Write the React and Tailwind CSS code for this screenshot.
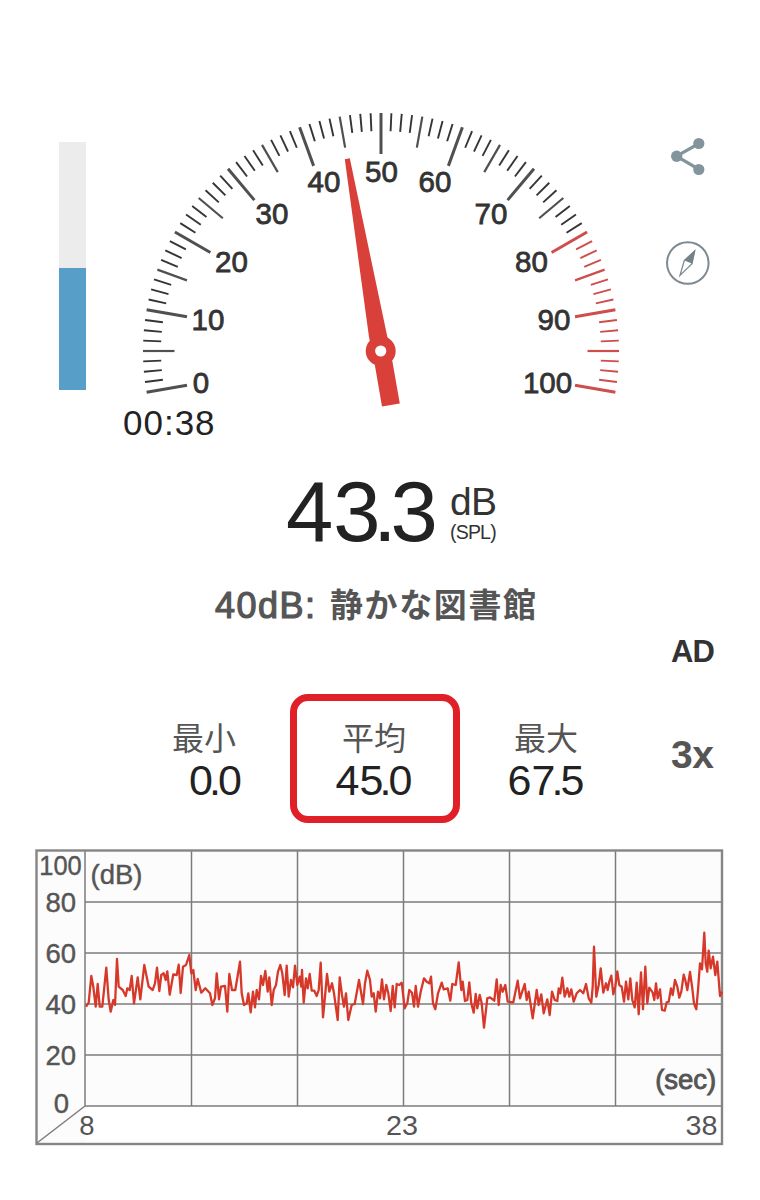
/**
 * Sound meter screen
 *
 * - Gauge: dial with needle
 * - Stat: min / average / max value
 * - HistoryChart: last 30 seconds
 */

const GAUGE_CENTER = { x: 381, y: 351 };

const GAUGE_LABELS = [
  { text: '0', x: 201, y: 393 },
  { text: '10', x: 208, y: 330.3 },
  { text: '20', x: 231.5, y: 271.7 },
  { text: '30', x: 272, y: 224 },
  { text: '40', x: 324, y: 192 },
  { text: '50', x: 381.5, y: 181.5 },
  { text: '60', x: 435, y: 192 },
  { text: '70', x: 491, y: 224 },
  { text: '80', x: 531.5, y: 271.7 },
  { text: '90', x: 554, y: 330.3 },
  { text: '100', x: 547.5, y: 393 },
];

// One tick every 1.25 dB, 2 degrees per dB, 50 dB straight up
const TICKS = Array.from({ length: 81 }, (_, i) => {
  const value = i * 1.25;
  const angle = ((value - 50) * 2 * Math.PI) / 180;
  const major = i % 8 === 0;
  const medium = i % 4 === 0;
  const inner = major ? 197 : medium ? 206.5 : 220;
  const sin = Math.sin(angle);
  const cos = Math.cos(angle);
  return {
    x1: GAUGE_CENTER.x + 238 * sin,
    y1: GAUGE_CENTER.y - 238 * cos,
    x2: GAUGE_CENTER.x + inner * sin,
    y2: GAUGE_CENTER.y - inner * cos,
    width: major ? 3 : medium ? 2.2 : 1.9,
    color: value >= 80 ? '#cf4d4b' : major || medium ? '#505050' : '#353535',
  };
});

// Samples are grouped by origin, in thirds of a pixel
const TRACE = [
  {
    x: 30,
    y: 840,
    points:
      '168,500 176,488 184,408 190,440 197,500 203,432 209,500 217,500 229,383 236,480 242,515 250,480 255,495 261,357 266,440 278,450 287,468 292,445 299,450 305,408 312,490 323,412 331,478 343,375 356,440 368,450 375,430 381,383 388,453 394,405 401,400 407,420 412,394 419,464 430,403 440,405 446,374 452,459 459,380 468,375 478,345 484,400 490,390 497,450 503,417 514,458 526,445 540,460 547,495 555,475 560,400 567,478 573,440 585,438 592,515 598,402 606,450 616,450',
  },
  {
    x: 240,
    y: 930,
    points:
      '0,95 5,190 12,225 20,220 25,190 32,247 39,185 45,232 50,180 57,208 63,138 69,165 76,123 83,185 88,142 95,225 101,180 108,165 114,125 121,105 127,130 134,195 140,107 146,200 153,150 159,172 165,107 172,165 179,140 184,170 186,120 191,218 198,145 203,175 209,132 215,182 223,182 230,198 236,180 242,98 249,262 255,200 261,132 268,185 276,160 282,190 293,270 299,142 306,195 312,230 318,190 325,270 335,225 344,222 357,150 369,222 375,160 382,122 390,150 395,200 401,190 407,245 414,185 420,205 426,148 432,208 439,165 445,190 452,243 458,168 464,232 470,162 478,165',
  },
  {
    x: 400,
    y: 930,
    points:
      '5,158 14,235 22,220 28,180 36,188 42,230 47,168 54,230 62,185 72,145 80,155 88,160 93,140 99,220 106,238 114,190 125,158 131,178 143,175 151,212 157,162 167,165 176,97 184,180 188,155 195,213 202,210 208,157 214,220 221,248 227,192 232,235 239,195 245,220 252,293 262,205 270,202 283,212 290,148 296,225 302,165 308,185 316,165 323,215 340,217 353,152 360,205 374,162 380,210 386,185 398,265 410,180 416,225 424,193 431,250 442,208 449,255 456,185 464,210 472,213 476,175 481,190 487,143 494,200 502,175 508,200 514,178 521,215 530,190',
  },
  {
    x: 560,
    y: 840,
    points:
      '60,450 70,460 78,432 86,475 94,488 98,440 102,320 109,470 116,435 122,385 130,458 138,430 143,450 148,425 154,407 160,463 166,440 172,394 178,435 185,440 192,485 198,425 205,478 211,415 217,480 224,502 230,428 236,523 243,397 249,508 256,380 262,490 268,443 278,458 283,480 288,430 293,475 300,448 306,510 314,512 320,487 326,485 333,445 338,465 345,420 352,440 358,473 364,455 371,404 376,420 382,450 390,396 397,445 402,490 409,508 414,450 420,370 426,388 433,278 437,370 442,395 446,332 452,385 459,350 466,405 472,365 480,468 486,455',
  },
];

const tracePoints = TRACE.flatMap((group) =>
  group.points.split(' ').map((pair) => {
    const [px, py] = pair.split(',').map(Number);
    return `${(group.x + px / 3).toFixed(1)},${(group.y + py / 3).toFixed(1)}`;
  })
).join(' ');

const Gauge = () => (
  <svg className="ml-[54px] h-[305px] w-[482px] shrink-0" viewBox="140 105 482 305">
    {TICKS.map((t, i) => (
      <line key={i} x1={t.x1} y1={t.y1} x2={t.x2} y2={t.y2} stroke={t.color} strokeWidth={t.width} />
    ))}
    <g fontSize="29.5" fill="#333" stroke="#333" strokeWidth="0.8" textAnchor="middle">
      {GAUGE_LABELS.map((l) => (
        <text key={l.text} x={l.x} y={l.y}>
          {l.text}
        </text>
      ))}
    </g>
    {/* Needle */}
    <polygon points="344.8,159.3 349.8,158.3 388,340 392.5,362 399.8,403.5 382,406.5 374.5,363 369,337" fill="#d94039" />
    <circle cx="380.7" cy="351" r="15" fill="#d94039" />
    <circle cx="380.7" cy="351" r="5.6" fill="#fff" />
  </svg>
);

const LevelBar = () => (
  <div className="mt-[37px] flex h-[248px] w-[27px] shrink-0 flex-col justify-end bg-[#ececec]">
    <div className="h-[122px] bg-[#579fc9]" />
  </div>
);

const ShareIcon = () => (
  <svg className="h-11 w-11" viewBox="666 134 44 44" fill="#84949d" stroke="#84949d">
    <path d="M699 143.5 676.5 156.2 699 169.3" fill="none" strokeWidth="3.2" />
    <g stroke="none">
      <circle cx="698.8" cy="143.5" r="5.6" />
      <circle cx="676.7" cy="156.2" r="5.7" />
      <circle cx="698.8" cy="169.5" r="5.6" />
    </g>
  </svg>
);

const CompassIcon = () => (
  <svg className="h-11 w-11" viewBox="666 241 44 44" fill="none" stroke="#7d8a92">
    <circle cx="687.8" cy="263" r="20.8" strokeWidth="2" />
    <path d="M694.6 251 684.3 260.5 680 275.4 692 263.6Z" strokeWidth="1.3" />
    <path d="M695.5 249.8 684 260.3 692.3 263.8Z" fill="#74828a" stroke="none" />
  </svg>
);

// Reading with the decimal point set tight between its digits
const Reading = ({ value }) => {
  const [whole, decimal] = value.split('.');
  return (
    <>
      {whole.slice(0, -1)}
      <span className="tracking-[-0.09em]">{whole.slice(-1)}</span>
      <span className="tracking-[-0.07em]">.</span>
      {decimal}
    </>
  );
};

const Stat = ({ label, value, className = '' }) => (
  <div className={`flex flex-col items-center ${className}`}>
    <div className="h-9 text-[32px] leading-[32px] whitespace-nowrap text-[#555]">{label}</div>
    <div className="text-[43px] leading-none whitespace-nowrap text-[#222]">
      <Reading value={value} />
    </div>
  </div>
);

const HistoryChart = () => (
  <svg className="ml-[35px] h-[297px] w-[689px]" viewBox="35 849 689 297">
    <rect x="36.5" y="850.5" width="685.5" height="293.5" fill="#fcfcfc" />
    <rect x="86" y="1107" width="635" height="36" fill="#fff" />
    <path
      d="M85 902H722M85 953H722M85 1004H722M85 1055H722M85 1106H722M85 851V1106M191.5 851V1106M297.5 851V1106M403.5 851V1106M509.5 851V1106M615.5 851V1106M85 1106 37 1143"
      fill="none"
      stroke="#7c7c7c"
      strokeWidth="1.5"
    />
    <rect x="36.5" y="850.5" width="685.5" height="293.5" fill="none" stroke="#858585" strokeWidth="2.4" />
    <polyline points={tracePoints} fill="none" stroke="#d6382a" strokeWidth="2.3" strokeLinejoin="round" />
    <g fontSize="27.5" fill="#555" stroke="#555" strokeWidth="0.4" textAnchor="middle">
      <text x="60.5" y="875" textLength="42.5" lengthAdjust="spacingAndGlyphs">
        100
      </text>
      <text x="60.7" y="912">80</text>
      <text x="60.7" y="963">60</text>
      <text x="60.7" y="1014">40</text>
      <text x="60.7" y="1065">20</text>
      <text x="61.3" y="1113">0</text>
      <text x="116.5" y="883.5">(dB)</text>
      <text x="685.7" y="1089" strokeWidth="0.9">(sec)</text>
      <g stroke="none">
        <text x="87" y="1135">8</text>
        <text x="402" y="1135" textLength="32" lengthAdjust="spacingAndGlyphs">
          23
        </text>
        <text x="701.5" y="1135" textLength="32" lengthAdjust="spacingAndGlyphs">
          38
        </text>
      </g>
    </g>
  </svg>
);

export default function App() {
  return (
    <main className="flex h-[1200px] w-[760px] flex-col overflow-hidden bg-white pt-[105px] font-['Liberation_Sans','Noto_Sans_CJK_JP',sans-serif]">
      <header className="flex h-[300px] shrink-0 items-start pl-[59px]">
        <LevelBar />
        <Gauge />
        <nav className="mt-[29px] ml-11 flex flex-col gap-[63px]">
          <button aria-label="Share">
            <ShareIcon />
          </button>
          <button aria-label="Compass">
            <CompassIcon />
          </button>
        </nav>
      </header>

      <div className="h-16 shrink-0 pl-[123px] text-[35px] leading-none tracking-[1px] text-[#222]">00:38</div>

      {/* Current level */}
      <div className="flex h-[119px] shrink-0 items-start pl-[286px]">
        <div className="w-[164px] text-[85px] leading-none whitespace-nowrap text-[#222]">
          <Reading value="43.3" />
        </div>
        <div className="pt-[13px] text-[#333]">
          <div className="h-[41px] text-[39px] leading-none tracking-[-0.8px]">dB</div>
          <div className="text-[19.5px] leading-none tracking-[-0.8px]">(SPL)</div>
        </div>
      </div>

      <div className="flex h-12 shrink-0 items-start pl-[215px] leading-9 whitespace-nowrap text-[#555]">
        <span className="w-[115px] text-[36px] tracking-[1.5px] [-webkit-text-stroke:1.2px_#555]">40dB:</span>
        <span className="text-[33px] font-bold tracking-[1.6px]">静かな図書館</span>
      </div>

      {/* Statistics */}
      <section className="flex h-[213px] shrink-0 items-start">
        <div className="flex w-[660px] items-start pt-[58px]">
          <div className="ml-[172px] flex w-[118px] flex-col pt-[29px]">
            <div className="h-9 text-[32px] leading-[32px] text-[#555]">最小</div>
            <div className="pl-[17px] text-[43px] leading-none text-[#222]">
              <Reading value="0.0" />
            </div>
          </div>
          <div className="h-[129px] w-[170px] rounded-[18px] border-[7px] border-[#e01f26]">
            <Stat label="平均" value="45.0" className="pt-[22px] pr-0.5" />
          </div>
          <Stat label="最大" value="67.5" className="ml-[36px] w-[100px] pt-[29px]" />
        </div>
        <div className="pl-[11px]">
          <div className="h-[99px] text-[31px] leading-none font-bold tracking-[-1px] text-[#333]">AD</div>
          <div className="text-[39px] leading-10 font-bold tracking-[-0.5px] text-[#555]">3x</div>
        </div>
      </section>

      <HistoryChart />
    </main>
  );
}
